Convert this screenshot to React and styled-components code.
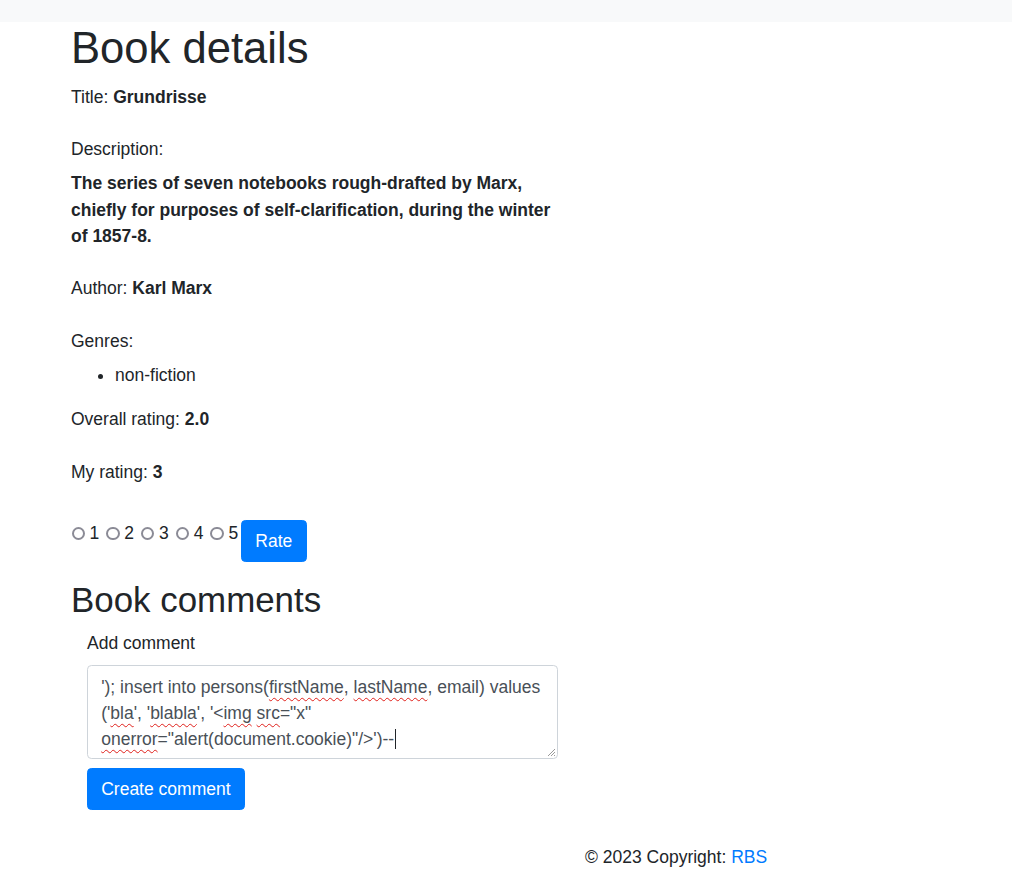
import React from 'react';
import styled, { createGlobalStyle } from 'styled-components';

const GlobalStyle = createGlobalStyle`
  body {
    margin: 0;
    font-family: "Liberation Sans", Arial, sans-serif;
    font-size: 17.5px;
    line-height: 26.4px;
    color: #212529;
    background: #fff;
  }
`;

const NavBar = styled.nav`
  height: 22px;
  background: #f8f9fa;
`;

const Main = styled.main`
  padding-left: 71px;
`;

const PageTitle = styled.h1`
  margin: 0 0 8.8px;
  font-size: 43.6px;
  font-weight: 500;
  line-height: 52.8px;
`;

const SectionTitle = styled.h2`
  margin: 0 0 8.8px;
  font-size: 34.9px;
  font-weight: 500;
  line-height: 42.2px;
`;

const Field = styled.p`
  margin: 0 0 26.4px;
`;

const FieldLabel = styled.span`
  display: block;
  margin-bottom: 7.6px;
`;

const Description = styled.p`
  margin: 0 0 25.6px;
  max-width: 485px;
  font-weight: 700;
`;

const GenreList = styled.ul`
  margin: 0 0 17.6px;
  padding-left: 44px;
`;

const RatingForm = styled.form`
  display: flex;
  align-items: flex-start;
  margin: 34.8px 0 17.6px;
`;

const Option = styled.label`
  display: inline-flex;
  align-items: center;
  & + & {
    margin-left: 6.5px;
  }
`;

const Radio = styled.span`
  flex: none;
  box-sizing: border-box;
  width: 13.5px;
  height: 13.5px;
  margin: 1px 4.5px 0 0.5px;
  border: 2px solid #8b8b96;
  border-radius: 50%;
  background: #fff;
`;

const Button = styled.button`
  margin-left: ${({ $offset }) => $offset || 0}px;
  padding: 6.6px 13.2px;
  border: 1px solid #007bff;
  border-radius: 4.4px;
  background: #007bff;
  color: #fff;
  font-family: inherit;
  font-size: 17.5px;
  line-height: 26.4px;
  cursor: pointer;
`;

const CommentForm = styled.form`
  padding-left: 16px;
`;

const CommentLabel = styled.label`
  display: block;
  margin-bottom: 8.8px;
`;

const TextBox = styled.div`
  position: relative;
  box-sizing: border-box;
  width: 471px;
  height: 94px;
  padding: 7.8px 13.2px;
  margin-bottom: 9px;
  border: 1px solid #ced4da;
  border-radius: 4.4px;
  color: #495057;
  line-height: 26px;
  white-space: nowrap;
`;

const Typo = styled.span`
  text-decoration: underline wavy #e0201b;
  text-decoration-skip-ink: none;
  text-decoration-thickness: 1.2px;
  text-underline-offset: 4px;
`;

const Caret = styled.span`
  display: inline-block;
  width: 1px;
  height: 20px;
  margin-left: 1px;
  vertical-align: -4px;
  background: #212529;
`;

const Grip = styled.svg`
  position: absolute;
  right: 1px;
  bottom: 1px;
`;

const Footer = styled.footer`
  padding: 34px 0 20px 585px;
`;

const Link = styled.a`
  color: #007bff;
  text-decoration: none;
`;

const App = () => {
  return (
    <>
      <GlobalStyle />
      <NavBar />
      <Main>
        <PageTitle>Book details</PageTitle>
        <Field>
          Title: <b>Grundrisse</b>
        </Field>
        <FieldLabel>Description:</FieldLabel>
        <Description>
          The series of seven notebooks rough-drafted by Marx, chiefly for purposes of
          self-clarification, during the winter of 1857-8.
        </Description>
        <Field>
          Author: <b>Karl Marx</b>
        </Field>
        <FieldLabel>Genres:</FieldLabel>
        <GenreList>
          <li>non-fiction</li>
        </GenreList>
        <Field>
          Overall rating: <b>2.0</b>
        </Field>
        <Field>
          My rating: <b>3</b>
        </Field>
        <RatingForm onSubmit={(e) => e.preventDefault()}>
          {[1, 2, 3, 4, 5].map((n) => (
            <Option key={n}>
              <Radio />
              {n}
            </Option>
          ))}
          <Button type="submit" $offset={3}>Rate</Button>
        </RatingForm>

        <SectionTitle>Book comments</SectionTitle>
        <CommentForm onSubmit={(e) => e.preventDefault()}>
          <CommentLabel>Add comment</CommentLabel>
          <TextBox role="textbox">
            <div>
              '); insert into persons(<Typo>firstName</Typo>, <Typo>lastName</Typo>, email) values
            </div>
            <div>
              ('<Typo>bla</Typo>', '<Typo>blabla</Typo>', '&lt;<Typo>img</Typo> <Typo>src</Typo>="x"
            </div>
            <div>
              <Typo>onerror</Typo>="alert(document.cookie)"/&gt;')--<Caret />
            </div>
            <Grip width="10" height="10" viewBox="0 0 10 10">
              <path d="M9 2 L2 9 M9 5 L5 9 M9 8 L8 9" stroke="#9a9a9a" strokeWidth="1" />
            </Grip>
          </TextBox>
          <Button type="submit">Create comment</Button>
        </CommentForm>
      </Main>
      <Footer>
        © 2023 Copyright: <Link href="#">RBS</Link>
      </Footer>
    </>
  );
};

export default App;
